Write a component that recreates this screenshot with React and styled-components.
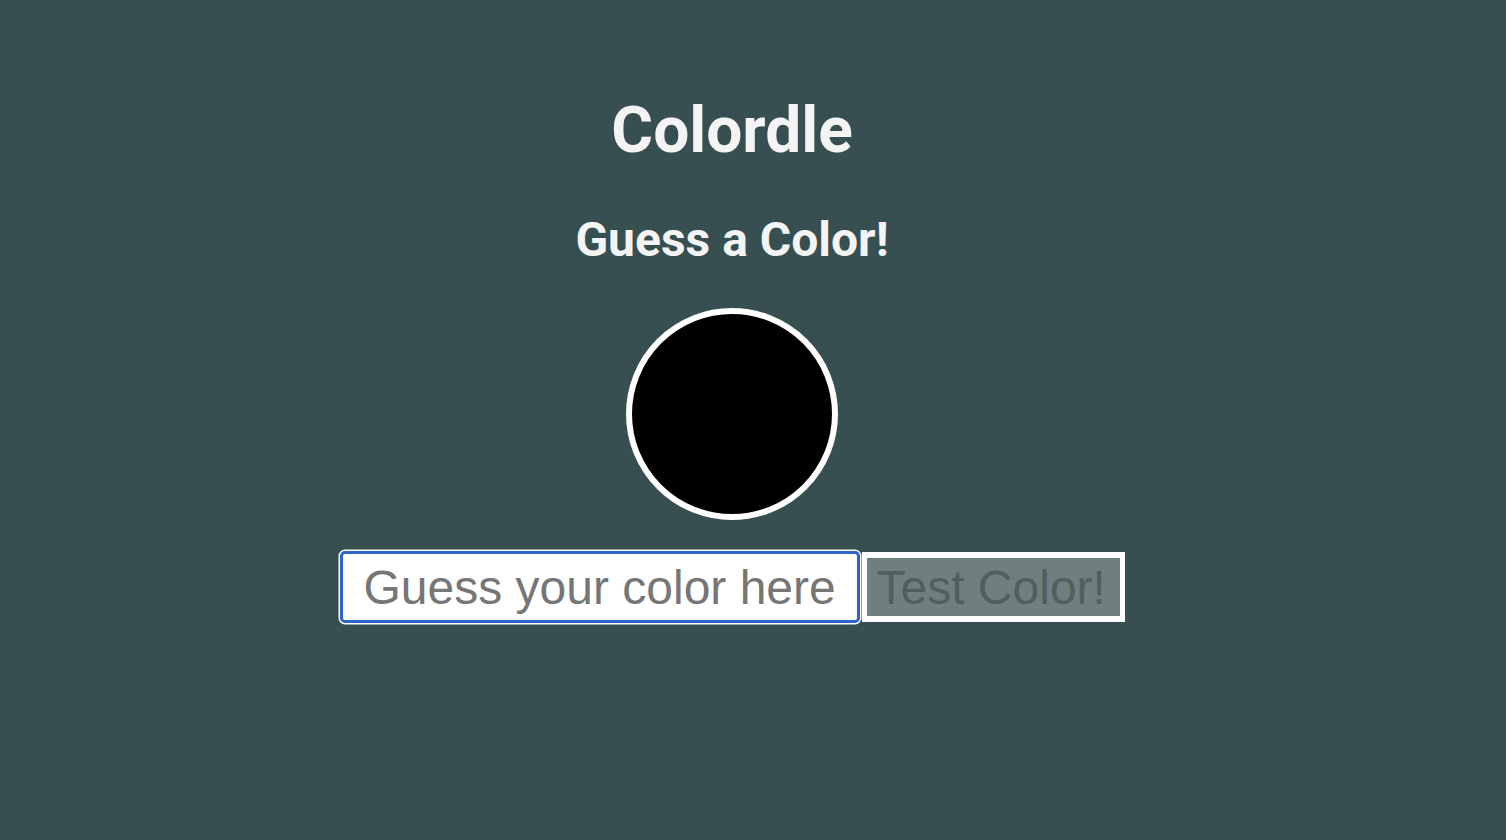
import React, { useState } from 'react';
import styled, { createGlobalStyle } from 'styled-components';

const GlobalStyle = createGlobalStyle`
  html, body {
    margin: 0;
    padding: 0;
    background: #374f51;
    font-family: Roboto, "Liberation Sans", Arial, sans-serif;
  }
`;

const Page = styled.main`
  width: 1464px;
  min-height: 840px;
  display: flex;
  flex-direction: column;
  align-items: center;
  padding-top: 93px;
  box-sizing: border-box;
`;

const Title = styled.h1`
  margin: 0;
  font-size: 64px;
  font-weight: 700;
  line-height: 75px;
  color: #f4f4f4;
`;

const Subtitle = styled.h2`
  margin: 44px 0 0;
  font-size: 48px;
  font-weight: 700;
  line-height: 56px;
  color: #f4f4f4;
`;

const Swatch = styled.div`
  margin-top: 40px;
  width: 200px;
  height: 200px;
  border: 6px solid #ffffff;
  border-radius: 50%;
  background: ${props => props.$color};
`;

const GuessRow = styled.form`
  margin-top: 31px;
  display: flex;
  align-items: center;
  gap: 2px;
`;

const GuessInput = styled.input`
  width: 520px;
  height: 72px;
  box-sizing: border-box;
  padding: 0 20px 0 21px;
  border: 3px solid #2f63c9;
  border-radius: 5px;
  box-shadow: 0 0 0 1.5px #ffffff;
  outline: none;
  background: #ffffff;
  font-family: "Liberation Sans", Arial, sans-serif;
  font-size: 48px;
  color: #222;

  &::placeholder {
    color: #767676;
  }
`;

const TestButton = styled.button`
  width: 263px;
  height: 70px;
  box-sizing: border-box;
  padding: 0 0 0 10px;
  border: 5px solid #ffffff;
  border-top-width: 6px;
  border-bottom-width: 6px;
  border-radius: 0;
  background: #6e7f7e;
  font-family: "Liberation Sans", Arial, sans-serif;
  font-size: 48px;
  color: #505f5e;
  text-align: left;
  white-space: nowrap;
  cursor: default;
`;

export default function App() {
  const [guess, setGuess] = useState('');

  return (
    <>
      <GlobalStyle />
      <Page>
        <Title>Colordle</Title>
        <Subtitle>Guess a Color!</Subtitle>
        <Swatch $color="#000000" />
        <GuessRow onSubmit={e => e.preventDefault()}>
          <GuessInput
            value={guess}
            onChange={e => setGuess(e.target.value)}
            placeholder="Guess your color here"
          />
          <TestButton type="submit" disabled={!guess}>Test Color!</TestButton>
        </GuessRow>
      </Page>
    </>
  );
}
